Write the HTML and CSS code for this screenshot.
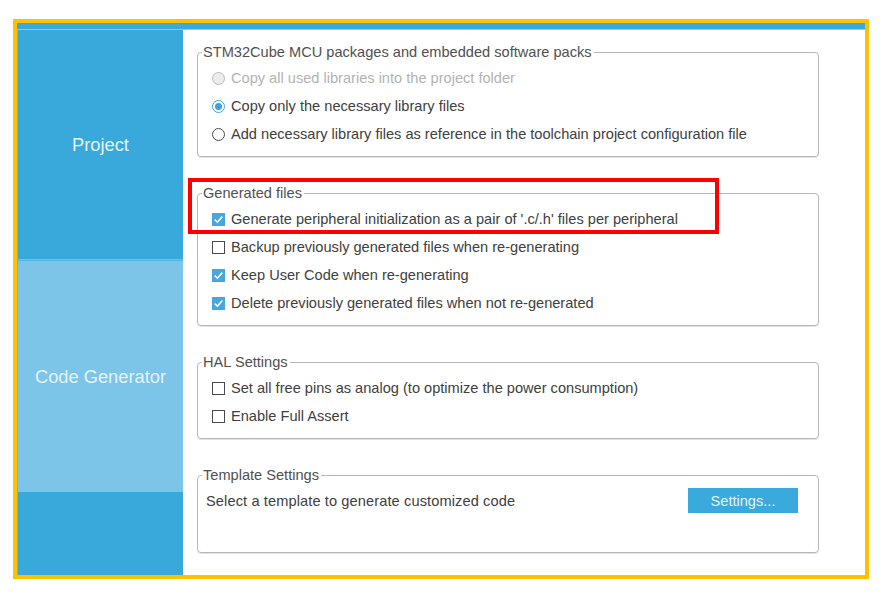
FILE: index.html
```html
<!DOCTYPE html>
<html>
<head>
<meta charset="utf-8">
<link rel="stylesheet" href="styles.css">
</head>
<body>
<div class="frame">
  <div class="topbar"></div>
  <div class="main">
    <nav class="sidebar">
      <div class="nav-item nav-project">Project</div>
      <div class="nav-item nav-code">Code Generator</div>
      <div class="nav-rest"></div>
    </nav>
    <div class="content">
      <fieldset class="group">
        <legend>STM32Cube MCU packages and embedded software packs</legend>
        <div class="opts">
          <label class="row disabled"><span class="radio"></span>Copy all used libraries into the project folder</label>
          <label class="row"><span class="radio on"></span>Copy only the necessary library files</label>
          <label class="row"><span class="radio"></span>Add necessary library files as reference in the toolchain project configuration file</label>
        </div>
      </fieldset>
      <fieldset class="group">
        <legend>Generated files</legend>
        <div class="opts">
          <label class="row"><span class="check on"><svg viewBox="0 0 13 13" width="13" height="13"><path d="M2.8 6.6 L5.4 9.2 L10.3 3.6" fill="none" stroke="#fff" stroke-width="1.6"/></svg></span>Generate peripheral initialization as a pair of '.c/.h' files per peripheral</label>
          <label class="row"><span class="check"></span>Backup previously generated files when re-generating</label>
          <label class="row"><span class="check on"><svg viewBox="0 0 13 13" width="13" height="13"><path d="M2.8 6.6 L5.4 9.2 L10.3 3.6" fill="none" stroke="#fff" stroke-width="1.6"/></svg></span>Keep User Code when re-generating</label>
          <label class="row"><span class="check on"><svg viewBox="0 0 13 13" width="13" height="13"><path d="M2.8 6.6 L5.4 9.2 L10.3 3.6" fill="none" stroke="#fff" stroke-width="1.6"/></svg></span>Delete previously generated files when not re-generated</label>
        </div>
      </fieldset>
      <fieldset class="group">
        <legend>HAL Settings</legend>
        <div class="opts">
          <label class="row"><span class="check"></span>Set all free pins as analog (to optimize the power consumption)</label>
          <label class="row"><span class="check"></span>Enable Full Assert</label>
        </div>
      </fieldset>
      <fieldset class="group template">
        <legend>Template Settings</legend>
        <div class="tpl-row">
          <span class="tpl-text">Select a template to generate customized code</span>
          <button class="btn">Settings...</button>
        </div>
      </fieldset>
      <div class="highlight"></div>
    </div>
  </div>
</div>
</body>
</html>
```
FILE: styles.css
```css
html, body {
  margin: 0;
  padding: 0;
  background: #ffffff;
}
body {
  font-family: "Liberation Sans", Arial, sans-serif;
  font-size: 14.6px;
  color: #404040;
}
.frame {
  box-sizing: border-box;
  width: 856px;
  height: 560px;
  margin: 19px 0 0 13px;
  border: 4px solid #ffc000;
  display: flex;
  flex-direction: column;
}
.topbar {
  height: 6px;
  background: #3aa8db;
  border-bottom: 1px solid #8dcbeb;
  flex: none;
}
.main {
  flex: 1;
  display: flex;
  min-height: 0;
}
.sidebar {
  width: 166px;
  flex: none;
  display: flex;
  flex-direction: column;
  background: #39a8da;
  border-left: 1px solid #62b9e3;
  box-sizing: border-box;
}
.nav-item {
  display: flex;
  align-items: center;
  justify-content: center;
  color: #e4f3fb;
  font-size: 18.3px;
}
.nav-project {
  height: 229px;
  border-bottom: 1px solid #76c1e7;
}
.nav-code {
  height: 232px;
  background: #7cc4e8;
  border-top: 1px solid #55b3e0;
  box-sizing: border-box;
}
.nav-rest {
  flex: 1;
}
.content {
  flex: 1;
  position: relative;
  padding: 14px 46px 0 14px;
}
.group {
  margin: 0 0 28px 0;
  padding: 4px 0 8px 4px;
  border: 1px solid #b5b7ba;
  border-radius: 4px;
  box-shadow: 0 1px 0 #e2e3e5;
  min-width: 0;
}
.group legend {
  padding: 0 2px 0 1px;
  line-height: 16px;
  color: #505050;
}
.opts {
  display: flex;
  flex-direction: column;
  padding-left: 10px;
}
.row {
  height: 28px;
  display: flex;
  align-items: center;
  gap: 6px;
  white-space: nowrap;
}
.row.disabled {
  color: #b3b3b3;
}
.radio {
  box-sizing: border-box;
  width: 13px;
  height: 13px;
  border-radius: 50%;
  border: 1px solid #4a4a4a;
  background: #fff;
  flex: none;
  position: relative;
}
.row.disabled .radio {
  border-color: #b9b9b9;
  background: #ececec;
}
.radio.on {
  border-color: #3da3dc;
}
.radio.on::after {
  content: "";
  position: absolute;
  left: 2px;
  top: 2px;
  width: 7px;
  height: 7px;
  border-radius: 50%;
  background: #3da3dc;
}
.check {
  box-sizing: border-box;
  width: 13px;
  height: 13px;
  border: 1px solid #4a4a4a;
  background: #fff;
  flex: none;
  display: block;
}
.check.on {
  border: none;
  background: #46a6dd;
}
.check svg {
  display: block;
}
.tpl-row {
  min-height: 56px;
  display: flex;
  align-items: flex-start;
  justify-content: space-between;
  padding: 1px 20px 0 4px;
}
.tpl-text {
  line-height: 26px;
  letter-spacing: 0.11px;
}
.btn {
  width: 110px;
  height: 25px;
  border: none;
  background: #3aa9dc;
  color: #e6f4fb;
  font-family: "Liberation Sans", Arial, sans-serif;
  font-size: 14.6px;
  padding: 0;
}
.highlight {
  position: absolute;
  left: 5px;
  top: 148px;
  width: 531px;
  height: 56px;
  box-sizing: border-box;
  border: 4px solid #ff0000;
  pointer-events: none;
}
```
